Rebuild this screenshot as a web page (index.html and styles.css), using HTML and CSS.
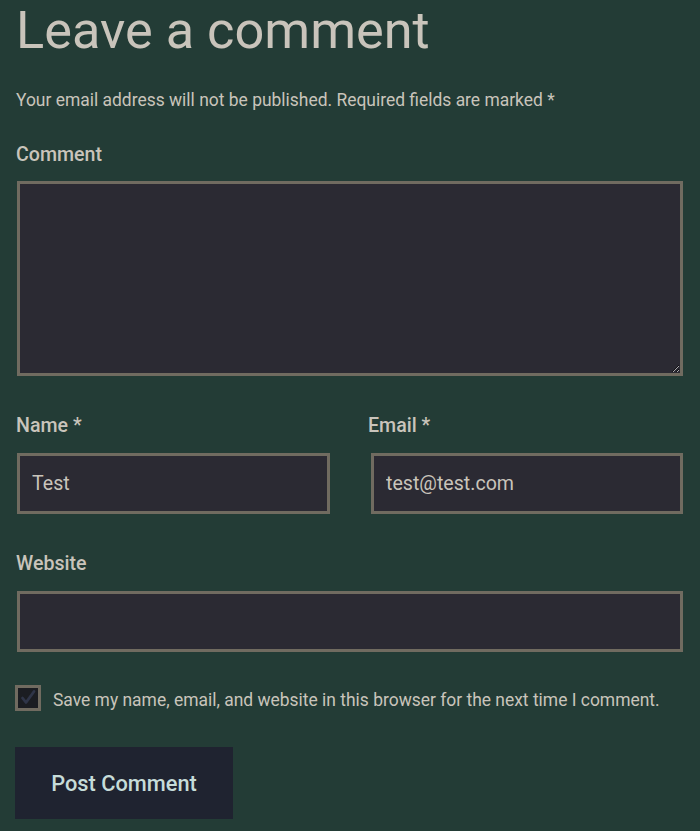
FILE: index.html
```html
<!DOCTYPE html>
<html>
<head>
<meta charset="utf-8">
<link rel="stylesheet" href="styles.css">
</head>
<body>
<div class="respond">
  <h3 class="title">Leave a comment</h3>
  <form class="form">
    <p class="notes">Your email address will not be published. Required fields are marked *</p>
    <div class="field field-first">
      <label class="label">Comment</label>
      <textarea class="textarea"></textarea>
    </div>
    <div class="row">
      <div class="field">
        <label class="label">Name *</label>
        <input class="input" type="text" value="Test">
      </div>
      <div class="field">
        <label class="label">Email *</label>
        <input class="input" type="text" value="test@test.com">
      </div>
    </div>
    <div class="field">
      <label class="label">Website</label>
      <input class="input" type="text" value="">
    </div>
    <div class="consent">
      <span class="check">
        <svg viewBox="0 0 20 20"><path d="M4.5 10 L8 14.5 L16 3.5" fill="none" stroke="#2f3548" stroke-width="2.8" stroke-linecap="round" stroke-linejoin="round"/></svg>
      </span>
      <span class="consent-text">Save my name, email, and website in this browser for the next time I comment.</span>
    </div>
    <button class="submit" type="button">Post Comment</button>
  </form>
</div>
</body>
</html>
```

FILE: styles.css
```css
html, body {
  margin: 0;
  padding: 0;
  background: #233c36;
}
body {
  font-family: Roboto, "Liberation Sans", sans-serif;
  color: #c9c4bb;
}
.respond {
  padding: 0 16px;
}
.title {
  margin: 1px 0 0 0;
  font-size: 52.3px;
  font-weight: 400;
  line-height: 58px;
  color: #c9c4bb;
}
.form {
  display: flex;
  flex-direction: column;
}
.notes {
  margin: 28px 0 0 0;
  font-size: 17.44px;
  line-height: 26px;
}
.field {
  display: flex;
  flex-direction: column;
}
.label {
  font-size: 19.6px;
  font-weight: 500;
  line-height: 28px;
  margin-top: 36px;
  margin-bottom: 13px;
}
.field-first .label {
  margin-top: 28px;
  margin-bottom: 12px;
}
.textarea, .input {
  box-sizing: border-box;
  margin: 0 1px;
  border: 3px solid #706b60;
  background: #2b2a33;
  color: #c9c4bb;
  font-family: Roboto, "Liberation Sans", sans-serif;
  font-size: 19.6px;
  outline: none;
}
.textarea {
  height: 195px;
  resize: vertical;
}
.input {
  height: 61px;
  padding: 0 12px;
}
.row {
  display: grid;
  grid-template-columns: 1fr 1fr;
  column-gap: 36px;
}
.row .field:first-child .input {
  margin-right: 2px;
}
.row .field:last-child .input {
  margin-left: 3px;
}
.consent {
  display: flex;
  align-items: flex-start;
  gap: 12px;
  margin-top: 33px;
  margin-left: -1px;
}
.check {
  box-sizing: border-box;
  width: 26px;
  height: 26px;
  flex: none;
  border: 3px solid #706b60;
  background: #1b1d22;
  display: flex;
  align-items: center;
  justify-content: center;
}
.check svg {
  width: 20px;
  height: 20px;
}
.consent-text {
  font-size: 17.44px;
  line-height: 26px;
  padding-top: 2px;
}
.submit {
  align-self: flex-start;
  margin: 34px 0 0 -1px;
  width: 218px;
  height: 72px;
  border: none;
  background: #1f2330;
  color: #c6dcd9;
  font-family: Roboto, "Liberation Sans", sans-serif;
  font-size: 21.8px;
  font-weight: 500;
  padding: 0;
}
```
